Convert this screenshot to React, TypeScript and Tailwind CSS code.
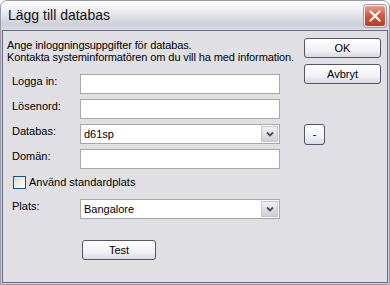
import React from "react";

const font = { fontFamily: '"Liberation Sans", Arial, sans-serif' };

function TextBox({ value }: { value?: string }) {
  return (
    <div className="h-[20px] w-[200px] border border-[#a7a6aa] bg-white px-[3px] text-[11px] leading-[18px] text-black">
      {value}
    </div>
  );
}

function Combo({ value }: { value: string }) {
  return (
    <div className="flex h-[20px] w-[200px] items-center border border-[#a7a6aa] bg-white pl-[3px] pr-[1px] text-[11px] text-black">
      <span className="flex-1">{value}</span>
      <span className="flex h-[16px] w-[17px] items-center justify-center border border-[#c6c6cc] bg-[linear-gradient(to_bottom,#f0f0f4,#cfcfd6)]">
        <svg width="8" height="6" viewBox="0 0 8 6">
          <path d="M1 1.5 L4 4.5 L7 1.5" fill="none" stroke="#4d4d55" strokeWidth="1.8" />
        </svg>
      </span>
    </div>
  );
}

function Btn({ label, className }: { label: string; className: string }) {
  return (
    <button
      className={
        "flex items-center justify-center rounded-[3px] border border-[#545468] bg-[linear-gradient(to_bottom,#ffffff,#f1f1f5_60%,#d9d9e4)] text-[11px] text-black " +
        className
      }
    >
      {label}
    </button>
  );
}

function Row({ label, children }: { label: string; children: React.ReactNode }) {
  return (
    <div className="flex h-[20px]">
      <span className="w-[73px] pl-[5px] text-[11px] leading-[15px] text-black">{label}</span>
      {children}
    </div>
  );
}

export default function App() {
  return (
    <div style={font} className="h-[285px] w-[390px] bg-white">
      <div className="flex h-full flex-col overflow-hidden rounded-t-[7px] border border-[#9a9aae] bg-[#cfcfda]">
        {/* title bar */}
        <div className="flex h-[29px] shrink-0 items-center justify-between bg-[linear-gradient(to_bottom,#ffffff,#ececf1_35%,#cfcfda_80%,#dcdce3)] pl-[7px] pr-[3px]">
          <span className="text-[14px] text-[#111]">Lägg till databas</span>
          <span className="flex h-[22px] w-[22px] items-center justify-center rounded-[3px] border border-[#f4f4f6] bg-[linear-gradient(to_bottom,#e89e8c,#d2553b_50%,#bf3a20)] shadow-[0_0_0_1px_#9d9aa8]">
            <svg width="12" height="12" viewBox="0 0 12 12">
              <path d="M1.5 1.5 L10.5 10.5 M10.5 1.5 L1.5 10.5" stroke="#fff" strokeWidth="2.2" strokeLinecap="round" />
            </svg>
          </span>
        </div>
        {/* body */}
        <div className="mx-[1px] mb-[1px] flex flex-1 border border-[#6c6c80] bg-[#e0dfe3]">
          <div className="w-[301px] pl-[4px] pt-[8px]">
            <p className="whitespace-nowrap text-[11px] leading-[12px] tracking-[-0.1px] text-black">
              Ange inloggningsuppgifter för databas.
              <br />
              Kontakta systeminformatören om du vill ha med information.
            </p>
            <div className="mt-[11px] flex flex-col gap-[5px]">
              <Row label="Logga in:">
                <TextBox />
              </Row>
              <Row label="Lösenord:">
                <TextBox />
              </Row>
              <Row label="Databas:">
                <Combo value="d61sp" />
              </Row>
              <Row label="Domän:">
                <TextBox />
              </Row>
            </div>
            <label className="mt-[7px] flex h-[13px] items-center gap-[3px] pl-[6px] text-[11px] text-black">
              <span className="h-[13px] w-[13px] border border-[#1c5180] bg-[linear-gradient(135deg,#dcdcd6,#ffffff)]" />
              Använd standardplats
            </label>
            <div className="mt-[10px]">
              <Row label="Plats:">
                <Combo value="Bangalore" />
              </Row>
            </div>
            <Btn label="Test" className="ml-[75px] mt-[21px] h-[20px] w-[74px]" />
          </div>
          <div className="flex flex-col pt-[7px]">
            <Btn label="OK" className="h-[20px] w-[77px]" />
            <Btn label="Avbryt" className="mt-[6px] h-[20px] w-[77px]" />
            <Btn label="-" className="mt-[40px] h-[21px] w-[21px]" />
          </div>
        </div>
      </div>
    </div>
  );
}
